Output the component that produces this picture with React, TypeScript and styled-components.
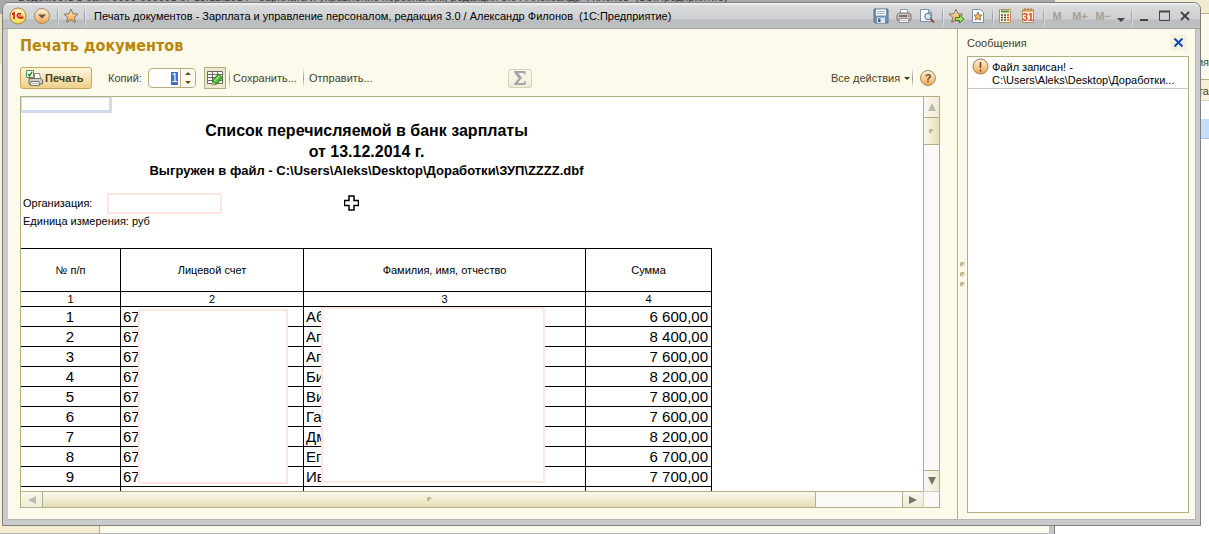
import React from "react";
import styled, { createGlobalStyle } from "styled-components";

const UI_FONT = '"Liberation Sans", Arial, sans-serif';
const LINE = "#b5ad84";
const CREAM = "#fcfaeb";

const GlobalStyle = createGlobalStyle`
  *, *::before, *::after { box-sizing: border-box; }
  body { margin: 0; font-family: ${UI_FONT}; font-size: 11px; color: #000; }
  button, input { font: inherit; color: inherit; margin: 0; }
  svg { display: block; flex: none; }
  h1, h2, p { margin: 0; }
`;

/* ---------- desktop and the windows behind ---------- */

const Desktop = styled.div`
  display: grid;
  grid-template-rows: 2px minmax(0, 1fr) 8px;
  height: 100vh;
  min-height: 400px;
  overflow: hidden;
  background: #fff;
`;

const BackTop = styled.div`
  display: flex;
  background: #f1ebd0;
`;

const BackTitle = styled.div`
  flex: none;
  width: 1055px;
  padding-left: 18px;
  overflow: hidden;
  background: #a9a9ab;
  color: #3a3a3c;
  font-size: 11px;
  line-height: 10px;
  white-space: pre;
  display: flex;
  align-items: flex-end;
`;

const Middle = styled.div`
  display: grid;
  grid-template-columns: 2px minmax(0, 1fr) 8px;
  min-height: 0;
`;

const BackLeft = styled.div`
  background: linear-gradient(#a9a9ab 0 12px, #e9e3c4 12px 62px, #f6f0dc 62px);
`;

const BackRight = styled.div`
  display: flex;
  flex-direction: column;
  overflow: hidden;
  color: #4a4420;
  background: #fff;
`;

const Slice = styled.div<{ $h: number; $bg: string; $line?: string }>`
  flex: none;
  height: ${(p) => p.$h}px;
  padding-bottom: 3px;
  background: ${(p) => p.$bg};
  border-bottom: ${(p) => (p.$line ? `1px solid ${p.$line}` : "0")};
  display: flex;
  align-items: flex-end;
  justify-content: flex-end;
`;

const TallSlice = styled(Slice)`
  padding-bottom: 11px;
`;

const BackBottom = styled.div`
  display: flex;
  background: #fff;
`;

const BackNav = styled.div`
  width: 100px;
  background: #f3eccd;
  border-right: 1px solid ${LINE};
  border-bottom: 1px solid #b4b6b8;
`;

const BackBody = styled.div`
  width: 949px;
  background: ${CREAM};
  border-bottom: 1px solid #b4b6b8;
`;

const BackEdge = styled.div`
  width: 6px;
  background: #c3c5c7;
  border-right: 1px solid #7f8183;
`;

/* ---------- the application window ---------- */

const Rounded = styled.div`
  min-width: 0;
  min-height: 0;
  display: flex;
  background: linear-gradient(90deg, #a9a9ab 0 50%, #f1ebd0 50%);
`;

const Window = styled.main`
  flex: 1;
  min-width: 0;
  display: flex;
  flex-direction: column;
  border: 1px solid #7d7f81;
  border-radius: 7px 7px 0 0;
  background: #c9cbcd;
  padding: 0 4px 5px 5px;
  overflow: hidden;
`;

const TitleBar = styled.header`
  flex: none;
  height: 26px;
  margin: 0 -4px 0 -5px;
  padding: 0 5px 0 6px;
  display: flex;
  align-items: center;
  border-bottom: 1px solid #a3a4a7;
  background: linear-gradient(#f4f4f4 0, #d9dadb 3px, #cfd0d1 16px, #bbbcbf 17px, #bfc0c2 100%);
`;

const WindowTitle = styled.div`
  flex: 1;
  min-width: 0;
  padding-left: 9px;
  white-space: pre;
  overflow: hidden;
`;

const Divider = styled.span<{ $h?: number; $gap?: number }>`
  flex: none;
  width: 1px;
  height: ${(p) => p.$h ?? 20}px;
  margin: 0 ${(p) => p.$gap ?? 5}px;
  background: linear-gradient(transparent, #96989a, transparent);
  box-shadow: 1px 0 rgba(255, 255, 255, 0.4);
`;

const ToolButton = styled.button<{ $w?: number }>`
  flex: none;
  width: ${(p) => p.$w ?? 24}px;
  height: 20px;
  padding: 0;
  border: 0;
  background: none;
  display: flex;
  align-items: center;
  justify-content: center;
  color: #a99d96;
  font-weight: bold;
`;

const Body = styled.div`
  flex: 1;
  min-height: 0;
  display: flex;
  background: ${CREAM};
  border-right: 1px solid #b4b6b8;
  border-bottom: 1px solid #b4b6b8;
`;

const MainPane = styled.section`
  flex: 1;
  min-width: 0;
  padding: 6px 17px 11px 12px;
  display: flex;
  flex-direction: column;
  border-right: 1px solid ${LINE};
`;

const Heading = styled.h1`
  font-family: "DejaVu Sans Condensed", "DejaVu Sans", sans-serif;
  font-size: 16px;
  line-height: 21px;
  color: #b8860b;
`;

const Toolbar = styled.div`
  height: 40px;
  flex: none;
  padding-top: 4px;
  display: flex;
  align-items: center;
  color: #47431f;
`;

const PrintButton = styled.button`
  width: 72px;
  height: 22px;
  padding: 0 0 0 5px;
  display: flex;
  align-items: center;
  gap: 2px;
  border: 1px solid #c8a95c;
  border-radius: 3px;
  background: linear-gradient(#fdf6df, #f5e4b4 50%, #ecd18b);
  font-weight: bold;
`;

const CopiesLabel = styled.label`
  margin: 0 6px 0 16px;
  width: 34px;
  white-space: nowrap;
`;

const Spinner = styled.div`
  width: 48px;
  height: 20px;
  display: flex;
  border: 1px solid ${LINE};
  border-radius: 4px;
  background: #fff;
  overflow: hidden;
`;

const SpinField = styled.input`
  flex: 1;
  min-width: 0;
  padding: 0 2px 0 21px;
  border: 0;
  outline: 0;
  text-align: right;
  font-size: 12px;
  color: #fff;
  background: linear-gradient(#4a66c8, #4a66c8) no-repeat right 2px center / 7px 13px;
`;

const SpinButtons = styled.div`
  width: 15px;
  display: flex;
  flex-direction: column;
  border-left: 1px solid ${LINE};
  background: #fbf9ec;
`;

const SpinButton = styled.button`
  flex: 1;
  padding: 0;
  border: 0;
  background: none;
  display: flex;
  align-items: center;
  justify-content: center;
`;

const GridToggle = styled.button`
  width: 22px;
  height: 22px;
  margin-left: 8px;
  padding: 0;
  display: flex;
  align-items: center;
  justify-content: center;
  border: 1px solid ${LINE};
  background: #ece7cd;
`;

const TextButton = styled.button<{ $w: number }>`
  width: ${(p) => p.$w}px;
  height: 20px;
  padding: 0;
  border: 0;
  background: none;
  display: flex;
  align-items: center;
  gap: 4px;
  white-space: nowrap;
`;

const SumButton = styled.button`
  width: 24px;
  height: 19px;
  margin-left: 134px;
  padding: 0;
  display: flex;
  align-items: center;
  justify-content: center;
  border: 1px solid #d5d0b2;
  border-radius: 3px;
  background: linear-gradient(#fbf9ee, #f1edd8);
`;

const Spacer = styled.span`
  flex: 1;
`;

const Gap = styled.span`
  width: 5px;
`;

/* ---------- spreadsheet document ---------- */

const Sheet = styled.div`
  flex: 1;
  min-height: 0;
  display: grid;
  grid-template-columns: minmax(0, 1fr) 17px;
  grid-template-rows: minmax(0, 1fr) 17px;
  border: 1px solid ${LINE};
  border-right: 0;
  border-bottom: 0;
  background: #fff;
`;

const Viewport = styled.div`
  position: relative;
  overflow: hidden;
`;

const Document = styled.article`
  width: 691px;
`;

const ActiveCell = styled.div`
  width: 91px;
  height: 16px;
  border: solid #d2daee;
  border-width: 1px 3px 3px 1px;
`;

const DocTitle = styled.h2`
  margin-top: 7px;
  font-size: 16px;
  line-height: 21px;
  text-align: center;
`;

const DocFile = styled.p`
  font-size: 13px;
  font-weight: bold;
  line-height: 17px;
  text-align: center;
`;

const DocMeta = styled.div`
  padding: 15px 0 18px 2px;
`;

const MetaRow = styled.p`
  display: flex;
  align-items: center;
  height: 18px;
`;

const MetaLabel = styled.span`
  width: 84px;
`;

const OrgMask = styled.span`
  width: 115px;
  height: 21px;
  border: 2px solid #ffe4e2;
  background: #fff;
`;

const Table = styled.table`
  width: 692px;
  margin-left: -1px;
  table-layout: fixed;
  border-collapse: collapse;
`;

const Col = styled.col<{ $w: number }>`
  width: ${(p) => p.$w}px;
`;

const Th = styled.th`
  height: 43px;
  padding: 0;
  border: 1px solid #000;
  font-weight: normal;
`;

const NumTd = styled.td`
  height: 15px;
  padding: 0;
  border: 1px solid #000;
  text-align: center;
  line-height: 13px;
`;

const Td = styled.td<{ $align?: string }>`
  height: 20px;
  padding: 0 3px 0 2px;
  border: 1px solid #000;
  font-size: 15px;
  line-height: 18px;
  text-align: ${(p) => p.$align ?? "left"};
`;

const Mask = styled.div<{ $x: number; $y: number; $w: number; $h: number }>`
  position: absolute;
  left: ${(p) => p.$x}px;
  top: ${(p) => p.$y}px;
  width: ${(p) => p.$w}px;
  height: ${(p) => p.$h}px;
  border: 2px solid #ffe4e2;
  background: #fff;
`;

const Pointer = styled.svg`
  position: absolute;
  left: 323px;
  top: 98px;
`;

const VBar = styled.div`
  display: flex;
  flex-direction: column;
  border: solid ${LINE};
  border-width: 0 1px;
  background: #faf9f5;
`;

const HBar = styled.div`
  display: flex;
  border: solid ${LINE};
  border-width: 1px 0;
  background: #faf9f5;
`;

const Corner = styled.div`
  border: 1px solid ${LINE};
  border-top-color: #d5cfae;
  border-left-color: #d5cfae;
  background: #faf9f5;
`;

const VPart = styled.button<{ $h: number; $side: "top" | "bottom"; $thumb?: boolean }>`
  flex: none;
  height: ${(p) => p.$h}px;
  padding: 0;
  border: 0 solid ${LINE};
  border-${(p) => p.$side}-width: 1px;
  background: linear-gradient(90deg, #faf8ec, ${(p) => (p.$thumb ? "#efeacb 60%, #e6e0bc" : "#efebd6")});
  display: flex;
  align-items: center;
  justify-content: center;
`;

const HPart = styled.button<{ $side: "left" | "right"; $grow?: boolean }>`
  flex: ${(p) => (p.$grow ? "9 1 0" : "none")};
  width: ${(p) => (p.$side === "left" ? 21 : 22)}px;
  padding: 0;
  border: 0 solid ${LINE};
  border-${(p) => p.$side}-width: 1px;
  background: linear-gradient(#faf8ec, ${(p) => (p.$grow ? "#efeacb 60%, #e2dcb4" : "#efebd6")});
  display: flex;
  align-items: center;
  justify-content: center;
`;

const HTrack = styled.span`
  flex: 1 1 0;
`;

const Dot = styled.span`
  width: 5px;
  height: 5px;
  border-radius: 2px;
  background: linear-gradient(135deg, #b5ae84 30%, #f7f3da 80%);
`;

/* ---------- splitter and messages ---------- */

const Splitter = styled.div`
  flex: none;
  width: 9px;
  padding-left: 2px;
  display: flex;
  flex-direction: column;
  justify-content: center;
  gap: 5px;
`;

const Messages = styled.aside`
  flex: none;
  width: 228px;
  padding: 5px 6px 6px 0;
  display: flex;
  flex-direction: column;
`;

const MessagesHead = styled.div`
  height: 22px;
  display: flex;
  align-items: flex-start;
  justify-content: space-between;
  line-height: 18px;
  color: #47431f;
`;

const CloseButton = styled.button`
  width: 17px;
  height: 17px;
  margin-right: 2px;
  padding: 0;
  border: 0;
  background: #f5f3e0;
  display: flex;
  align-items: center;
  justify-content: center;
`;

const MessageList = styled.div`
  flex: 1;
  border: 1px solid ${LINE};
  background: #fff;
`;

const Message = styled.div`
  height: 32px;
  padding-left: 4px;
  display: flex;
  gap: 3px;
  border-bottom: 1px solid #c9c9c9;
  line-height: 13px;
  white-space: nowrap;
  overflow: hidden;
`;

const MessageText = styled.p`
  padding-top: 4px;
`;

/* ---------- drawings ---------- */

const Svg = ({ w = 16, h = 16, children }: { w?: number; h?: number; children: React.ReactNode }) => (
  <svg width={w} height={h} viewBox={`0 0 ${w} ${h}`} fill="none" aria-hidden="true">{children}</svg>
);

const Defs = styled.svg`
  position: absolute;
`;

const Gradients = () => (
  <Defs width="0" height="0" aria-hidden="true">
    <defs>
      <linearGradient id="amber" x1="0" y1="0" x2="0" y2="1">
        <stop offset="0" stopColor="#fdf0d8" />
        <stop offset="0.6" stopColor="#f6c88a" />
        <stop offset="1" stopColor="#eaa04a" />
      </linearGradient>
      <radialGradient id="yellow" cx="0.5" cy="0.3" r="0.7">
        <stop offset="0" stopColor="#fffbd8" />
        <stop offset="1" stopColor="#fbd83a" />
      </radialGradient>
      <linearGradient id="gold" x1="0" y1="0" x2="0" y2="1">
        <stop offset="0" stopColor="#fde9b8" />
        <stop offset="1" stopColor="#f3a545" />
      </linearGradient>
    </defs>
  </Defs>
);

const Logo = () => (
  <Svg w={18} h={18}>
    <circle cx="9" cy="9" r="8" fill="url(#yellow)" stroke="#a08a50" />
    <path d="M3 7.500l2-1.500v6M12 7.200c-.6-1-3.700-1.200-3.700 1.400 0 2.300 1.700 2.400 6.200 2.400" stroke="#d3201a" strokeWidth="1.700" />
    <path d="M11.200 8.600h-.8c-.4.500 0 .6 4 .6" stroke="#d3201a" />
  </Svg>
);
const MenuRound = () => (
  <Svg w={18} h={18}>
    <circle cx="9" cy="9" r="7.500" fill="url(#amber)" stroke="#a58c68" />
    <path d="M5 7.500h8l-4 4z" fill="#5d5548" />
  </Svg>
);
const STAR = "M8 1.200l2 4.500 4.900.5-3.700 3.200 1.100 4.900L8 11.800l-4.300 2.500 1.100-4.900L1.100 6.200 6 5.700z";
const Star = () => (
  <Svg><path d={STAR} fill="url(#gold)" stroke="#7d7666" /></Svg>
);
const Save = () => (
  <Svg>
    <path d="M1 1h14v14H2l-1-1z" fill="#6f93b3" stroke="#55728c" />
    <path d="M3 1.500h10v6H3z" fill="#fff" /><path d="M4 3.500h8M4 5.500h8" stroke="#9db5c8" />
    <path d="M4 9.500h8V15H4z" fill="#dbe4ec" /><path d="M5 10.500h2.500V14H5z" fill="#49657d" />
  </Svg>
);
const Printer = () => (
  <Svg>
    <path d="M4.500 1.500h7v5h-7z" fill="#fff" stroke="#9a9a9a" />
    <path d="M1 6.500l2-1.500h10l2 1.500V12H1z" fill="#c9c6c2" stroke="#77726d" />
    <path d="M3 8h8" stroke="#5a5652" strokeWidth="1.500" /><path d="M12 8h2" stroke="#e0552e" />
    <path d="M4 10.500h8l1 4H3z" fill="#fff" stroke="#8b8b8b" /><path d="M5 12.500h6" stroke="#b4b4b4" />
  </Svg>
);
const Preview = () => (
  <Svg>
    <path d="M1.500 1.500h8l3 3v9h-11z" fill="#fff" stroke="#7793ac" /><path d="M9.500 1.500v3h3" stroke="#7793ac" />
    <circle cx="9" cy="8.500" r="3.300" fill="#cfe3f2" stroke="#5d6a78" /><path d="M11.500 11l3.500 3.500" stroke="#8a4c30" strokeWidth="2" />
  </Svg>
);
const StarArrow = () => (
  <Svg w={17}>
    <path d={STAR} fill="url(#gold)" stroke="#7d7666" />
    <path d="M7.500 9.500h4V7l4.500 4-4.500 4v-2.500h-4z" fill="#a3df67" stroke="#34852a" />
  </Svg>
);
const PageStar = () => (
  <Svg w={14}>
    <path d="M1.500 1.500h8l3 3v10h-11z" fill="#fff" stroke="#7793ac" />
    <path d="M7 4.200l1.200 2.700 2.800.3-2.100 1.900.7 2.900L7 10.500 4.400 12l.7-2.900L3 7.200l2.800-.3z" fill="#f6bd5d" stroke="#6b5e46" strokeWidth=".8" />
  </Svg>
);
const Calc = () => (
  <Svg w={14}>
    <path d="M1.500 1.500h11v13h-11z" fill="#fdf4dc" stroke="#b78e55" />
    <path d="M3 3.500h8" stroke="#4d9440" strokeWidth="2" />
    <path d="M3 7h2M6 7h2M3 9.500h2M6 9.500h2M3 12h2M6 12h2" stroke="#4f4a42" strokeWidth="1.300" />
    <path d="M9 7h2M9 9.500h2M9 12h2" stroke="#d8442e" strokeWidth="1.300" />
  </Svg>
);
const Calendar = () => (
  <Svg w={14}>
    <path d="M1.500 1.500h11v13h-11z" fill="#fffaf0" stroke="#b78e55" /><path d="M2 2h10v2H2z" fill="#eeb366" />
    <path d="M4 0v3M7 0v3M10 0v3" stroke="#a37a42" />
    <text x="7" y="13" textAnchor="middle" fontSize="10" fill="#e0402a">31</text>
  </Svg>
);
const CheckPrinter = () => (
  <Svg w={17}>
    <path d="M8.500 3.500h5l1 5h-6z" fill="#fff" stroke="#8a8a8a" />
    <path d="M3 8.500h12l1.500 1.500v4H3z" fill="#cfccc6" stroke="#6d6963" />
    <path d="M5 11.500h8l.5 4h-9z" fill="#fff" stroke="#77736d" /><path d="M6 13.500h6" stroke="#aaa" />
    <path d="M.5.500h7v7h-7z" fill="#fff" stroke="#53924c" /><path d="M2 4l1.500 2L6 2" stroke="#2b8a22" strokeWidth="1.500" />
  </Svg>
);
const GridPencil = () => (
  <Svg>
    <path d="M.5 1.500h15v12H.5z" fill="#fff" stroke="#6b6b62" />
    <path d="M1 4.500h14M1 7.500h14M1 10.500h14M5.500 2v11M10.500 2v11" stroke="#6b6b62" />
    <path d="M5 15l1-5.500 5.500-5.500 4 3.800-5.500 6z" fill="#4fb53a" stroke="#2c7423" /><path d="M7.500 11l5-5" stroke="#a5e287" strokeWidth="1.500" />
    <path d="M5 15l.7-3 2.300 2.300z" fill="#f1d9a6" />
  </Svg>
);
const Help = () => (
  <Svg>
    <circle cx="8" cy="8" r="7.500" fill="url(#amber)" stroke="#a98a60" />
    <text x="8" y="12" textAnchor="middle" fontSize="11" fontWeight="bold" fill="#6b4a25">?</text>
  </Svg>
);
const Warn = () => (
  <Svg w={17} h={18}>
    <circle cx="8.500" cy="9.500" r="7.500" fill="url(#amber)" stroke="#94795a" />
    <path d="M8.500 5v6M8.500 12.500v2" stroke="#6b4318" strokeWidth="1.500" />
  </Svg>
);
const Sigma = () => (
  <Svg w={12} h={14}>
    <path d="M0 0h11.500v3.500h-1.300L9.500 2H4.200l3.900 4.800L3.700 12h6l.9-2h1.200l-.3 4H0v-1.200L4.700 7.500 0 1.300z" fill="#a5a5a5" />
  </Svg>
);
const Tri = ({ d, color = "#77756c" }: { d: string; color?: string }) => (
  <Svg w={8} h={8}><path d={d} fill={color} /></Svg>
);

/* ---------- data ---------- */

const COLUMNS = [100, 183, 282, 126];

const ROWS: [string, string][] = [
  ["Аб", "6 600,00"],
  ["Аг", "8 400,00"],
  ["Аг", "7 600,00"],
  ["Би", "8 200,00"],
  ["Ви", "7 800,00"],
  ["Га", "7 600,00"],
  ["Дм", "8 200,00"],
  ["Ег", "6 700,00"],
  ["Ив", "7 700,00"],
];

export default function App() {
  return (
    <Desktop>
      <GlobalStyle />
      <Gradients />
      <BackTop>
        <BackTitle>Ведомость в банк 0000-000001 от 13.12.2014 - Зарплата и управление персоналом, редакция 3.0 / Александр Филонов  (1С:Предприятие)</BackTitle>
      </BackTop>
      <Middle>
        <BackLeft />
        <Rounded>
          <Window>
            <TitleBar>
              <Logo />
              <ToolButton $w={30} aria-label="Меню"><MenuRound /></ToolButton>
              <Divider $gap={0} />
              <ToolButton $w={26} aria-label="Избранное"><Star /></ToolButton>
              <Divider $gap={0} />
              <WindowTitle>Печать документов - Зарплата и управление персоналом, редакция 3.0 / Александр Филонов  (1С:Предприятие)</WindowTitle>
              <ToolButton aria-label="Сохранить"><Save /></ToolButton>
              <ToolButton $w={22} aria-label="Печать"><Printer /></ToolButton>
              <ToolButton aria-label="Просмотр"><Preview /></ToolButton>
              <Divider $gap={3} />
              <ToolButton $w={20} aria-label="Добавить в избранное"><StarArrow /></ToolButton>
              <ToolButton aria-label="Ссылка"><PageStar /></ToolButton>
              <Divider $gap={2} />
              <ToolButton $w={20} aria-label="Калькулятор"><Calc /></ToolButton>
              <ToolButton $w={26} aria-label="Календарь"><Calendar /></ToolButton>
              <Divider $gap={2} />
              <ToolButton $w={22}>M</ToolButton>
              <ToolButton>M+</ToolButton>
              <ToolButton $w={22}>M−</ToolButton>
              <ToolButton $w={14} aria-label="Ещё"><Svg w={8} h={12}><path d="M0 8h8l-4 4z" fill="#444" /></Svg></ToolButton>
              <Divider $gap={3} />
              <ToolButton $w={18} aria-label="Свернуть"><Svg w={8} h={12}><path d="M0 9h8v2H0z" fill="#444" /></Svg></ToolButton>
              <ToolButton $w={22} aria-label="Развернуть"><Svg w={11} h={12}><path d="M.5 1.500h10v9H.5z" stroke="#444" /><path d="M0 1.500h11" stroke="#444" strokeWidth="2" /></Svg></ToolButton>
              <ToolButton $w={20} aria-label="Закрыть"><Svg w={10} h={10}><path d="M1 1l8 8M9 1L1 9" stroke="#444" strokeWidth="2" /></Svg></ToolButton>
            </TitleBar>
            <Body>
              <MainPane>
                <Heading>Печать документов</Heading>
                <Toolbar>
                  <PrintButton><CheckPrinter />Печать</PrintButton>
                  <CopiesLabel htmlFor="copies">Копий:</CopiesLabel>
                  <Spinner>
                    <SpinField id="copies" defaultValue="1" />
                    <SpinButtons>
                      <SpinButton aria-label="Больше"><Svg w={6} h={3}><path d="M0 3h6L3 0z" fill="#5c5224" /></Svg></SpinButton>
                      <SpinButton aria-label="Меньше"><Svg w={6} h={3}><path d="M0 0h6L3 3z" fill="#5c5224" /></Svg></SpinButton>
                    </SpinButtons>
                  </Spinner>
                  <GridToggle aria-label="Редактирование"><GridPencil /></GridToggle>
                  <Divider $gap={3} />
                  <TextButton $w={70}>Сохранить...</TextButton>
                  <Divider $gap={0} />
                  <Gap />
                  <TextButton $w={65}>Отправить...</TextButton>
                  <SumButton aria-label="Сумма"><Sigma /></SumButton>
                  <Spacer />
                  <TextButton $w={78}>Все действия<Svg w={6} h={3}><path d="M0 0h6L3 3z" fill="#3c381c" /></Svg></TextButton>
                  <Divider $gap={3} />
                  <ToolButton aria-label="Справка"><Help /></ToolButton>
                </Toolbar>
                <Sheet>
                  <Viewport>
                    <Document>
                      <ActiveCell />
                      <DocTitle>Список перечисляемой в банк зарплаты<br />от 13.12.2014 г.</DocTitle>
                      <DocFile>Выгружен в файл - C:\Users\Aleks\Desktop\Доработки\ЗУП\ZZZZ.dbf</DocFile>
                      <DocMeta>
                        <MetaRow><MetaLabel>Организация:</MetaLabel><OrgMask /></MetaRow>
                        <MetaRow>Единица измерения: руб</MetaRow>
                      </DocMeta>
                      <Table>
                        <colgroup>
                          {COLUMNS.map((w) => <Col key={w} $w={w} />)}
                        </colgroup>
                        <thead>
                          <tr><Th>№ п/п</Th><Th>Лицевой счет</Th><Th>Фамилия, имя, отчество</Th><Th>Сумма</Th></tr>
                        </thead>
                        <tbody>
                          <tr><NumTd>1</NumTd><NumTd>2</NumTd><NumTd>3</NumTd><NumTd>4</NumTd></tr>
                          {ROWS.map(([name, sum], i) => (
                            <tr key={i}>
                              <Td $align="center">{i + 1}</Td><Td>67</Td><Td>{name}</Td><Td $align="right">{sum}</Td>
                            </tr>
                          ))}
                          <tr><Td /><Td /><Td /><Td /></tr>
                        </tbody>
                      </Table>
                    </Document>
                    <Mask $x={117} $y={212} $w={150} $h={175} />
                    <Mask $x={300} $y={210} $w={224} $h={176} />
                    <Pointer width="15" height="16" viewBox="0 0 15 16" aria-hidden="true">
                      <path d="M5 1h5v4.500h4.500v5H10V15H5v-4.500H.5v-5H5z" fill="#fff" stroke="#000" strokeWidth="1.500" />
                    </Pointer>
                  </Viewport>
                  <VBar>
                    <VPart $h={21} $side="bottom" aria-label="Вверх"><Tri d="M0 8h8L4 0z" color="#bdbbae" /></VPart>
                    <VPart $h={27} $side="bottom" $thumb aria-label="Ползунок"><Dot /></VPart>
                    <Spacer />
                    <VPart $h={21} $side="top" aria-label="Вниз"><Tri d="M0 0h8L4 8z" /></VPart>
                  </VBar>
                  <HBar>
                    <HPart $side="right" aria-label="Влево"><Tri d="M8 0v8L0 4z" color="#bdbbae" /></HPart>
                    <HPart $side="right" $grow aria-label="Ползунок"><Dot /></HPart>
                    <HTrack />
                    <HPart $side="left" aria-label="Вправо"><Tri d="M0 0v8l8-4z" /></HPart>
                  </HBar>
                  <Corner />
                </Sheet>
              </MainPane>
              <Splitter><Dot /><Dot /><Dot /></Splitter>
              <Messages>
                <MessagesHead>
                  Сообщения
                  <CloseButton aria-label="Закрыть сообщения"><Svg w={9} h={9}><path d="M.5.500l8 8M8.500.500l-8 8" stroke="#1746b4" strokeWidth="2" /></Svg></CloseButton>
                </MessagesHead>
                <MessageList>
                  <Message>
                    <Warn />
                    <MessageText>Файл записан! -<br />C:\Users\Aleks\Desktop\Доработки...</MessageText>
                  </Message>
                </MessageList>
              </Messages>
            </Body>
          </Window>
        </Rounded>
        <BackRight>
          <Slice $h={12} $bg="#f1ebd0" $line={LINE} />
          <TallSlice $h={66} $bg={CREAM} $line={LINE}><span>ия</span></TallSlice>
          <Slice $h={21} $bg="#f5f0d8" $line="#d8d2b0"><span>та</span></Slice>
          <Slice $h={18} $bg="#fff" />
          <Slice $h={20} $bg="#c5dcfb" $line="#a9c4ea" />
        </BackRight>
      </Middle>
      <BackBottom>
        <BackNav /><BackBody /><BackEdge />
      </BackBottom>
    </Desktop>
  );
}
